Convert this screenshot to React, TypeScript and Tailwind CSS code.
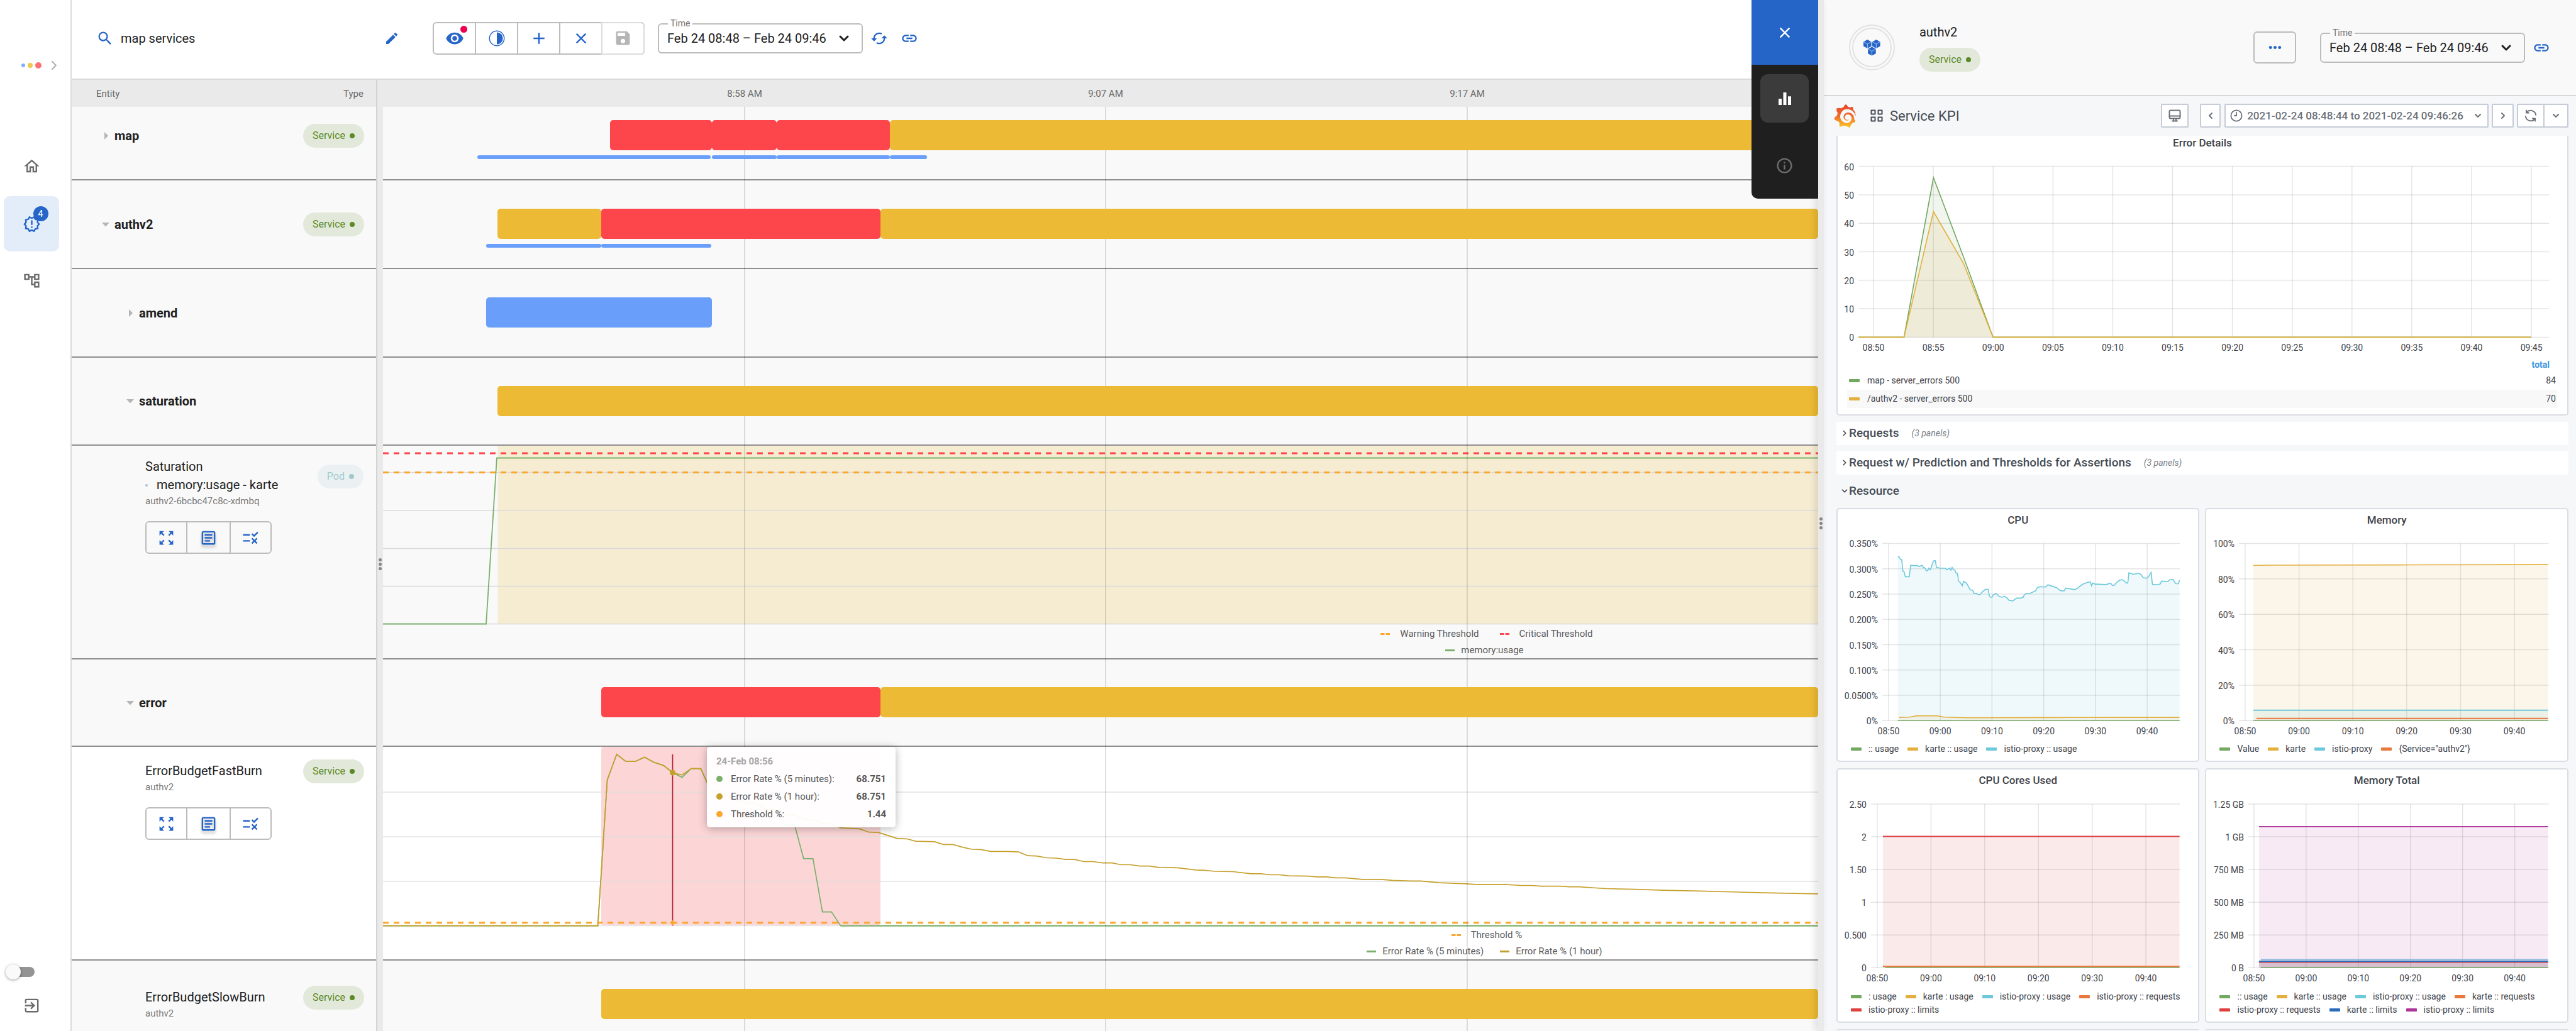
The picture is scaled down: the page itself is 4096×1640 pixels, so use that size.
import { useState, type ReactNode } from "react";
import {
  MdAdd,
  MdCached,
  MdClose,
  MdEdit,
  MdEqualizer,
  MdExitToApp,
  MdLink,
  MdMoreHoriz,
  MdOutlineAccountTree,
  MdOutlineArticle,
  MdOutlineHome,
  MdOutlineInfo,
  MdOutlineNewReleases,
  MdRule,
  MdSave,
  MdSearch,
  MdVisibility,
  MdZoomOutMap,
} from "react-icons/md";
import { SiGrafana } from "react-icons/si";
import { ChevronDown, ChevronLeft, ChevronRight } from "lucide-react";

/* ---------- shared pieces ---------- */

function Chip({ label, tone = "green" }: { label: string; tone?: "green" | "teal" }) {
  const green = tone === "green";
  return (
    <span
      className={`inline-flex h-[38px] items-center gap-[7px] rounded-full px-[15px] text-base leading-none ${
        green ? "bg-[#e2e9da] text-[#5c8a26]" : "bg-[#ebf1f3] text-[#9fcacd]"
      }`}
    >
      {label}
      <span className={`size-2 rounded-full ${green ? "bg-[#5c8a26]" : "bg-[#9fcacd]"}`} />
    </span>
  );
}

function TimeSelect({ id, surface }: { id: string; surface: string }) {
  return (
    <div className="relative h-12 w-[326px]">
      <label htmlFor={id} className={`absolute -top-2 left-4 px-1 text-sm leading-4 text-[#757575] ${surface}`}>
        Time
      </label>
      <select
        id={id}
        className="h-12 w-full appearance-none rounded-md border-2 border-[#bcbcbc] bg-transparent pl-[13px] text-xl text-[#212121]"
      >
        <option>Feb 24 08:48 – Feb 24 09:46</option>
      </select>
      <ChevronDown className="pointer-events-none absolute top-3 right-[18px] size-6 text-[#212121]" strokeWidth={3} />
    </div>
  );
}

function ContrastIcon() {
  return (
    <svg viewBox="0 0 26 26" className="size-[26px]" fill="none">
      <circle cx="13" cy="13" r="11.7" stroke="currentColor" strokeWidth="1.4" />
      <path d="M13 3.4a9.6 9.6 0 0 1 0 19.2z" fill="currentColor" />
    </svg>
  );
}

function CubesIcon() {
  const cube = (x: number, y: number) => (
    <g transform={`translate(${x} ${y})`}>
      <path d="M6.3 0 12.6 3.4V10.6L6.3 14 0 10.6V3.4z" fill="currentColor" />
      <path d="M.4 3.6 6.3 6.9 12.2 3.6M6.3 6.9V13.8" stroke="#cfe0f7" strokeWidth=".8" fill="none" />
    </g>
  );
  return (
    <svg viewBox="0 0 27 26" className="h-[26px] w-[27px] text-[#2665c8]">
      {cube(0, 0)}
      {cube(14, 0)}
      {cube(7.1, 11.6)}
    </svg>
  );
}

function GripDots() {
  return (
    <span className="flex flex-col gap-[2px]">
      <i className="size-[5px] rounded-full bg-[#858585]" />
      <i className="size-[5px] rounded-full bg-[#858585]" />
      <i className="size-[5px] rounded-full bg-[#858585]" />
    </span>
  );
}

/* ---------- navigation rail ---------- */

function Rail() {
  const [dark, setDark] = useState(false);
  return (
    <nav className="flex w-[114px] shrink-0 flex-col border-r-2 border-[#dcdcdc] bg-white text-[#6b6b6b]">
      <button className="mt-[92px] ml-[34px] flex h-6 items-center" aria-label="Expand menu">
        <span className="size-[6px] rounded-full bg-[#7fb1fb]" />
        <span className="ml-1 size-2 rounded-full bg-[#efc84f]" />
        <span className="ml-1 size-[10px] rounded-full bg-[#fd7074]" />
        <ChevronRight className="ml-2 size-6 text-[#b0b0b0]" strokeWidth={2} />
      </button>
      <a href="#home" aria-label="Home" className="mt-[104px] ml-[6px] flex h-[88px] w-[88px] items-center justify-center">
        <MdOutlineHome size={29} />
      </a>
      <a
        href="#insights"
        aria-label="Insights"
        className="mt-1 ml-[6px] flex h-[88px] w-[88px] items-center justify-center rounded-[10px] bg-[#e3edfa] text-[#2665c8]"
      >
        <span className="relative">
          <MdOutlineNewReleases size={29} />
          <span className="absolute -top-[14px] left-[17px] flex size-6 items-center justify-center rounded-full bg-[#2665c8] text-sm text-white">
            4
          </span>
        </span>
      </a>
      <a href="#graph" aria-label="Entity graph" className="mt-[2px] ml-[6px] flex h-[88px] w-[88px] items-center justify-center">
        <MdOutlineAccountTree size={29} />
      </a>
      <div className="mt-auto flex flex-col">
        <input
          type="checkbox"
          role="switch"
          aria-label="Dark mode"
          checked={dark}
          onChange={() => setDark(!dark)}
          className="relative ml-[15px] h-4 w-10 appearance-none rounded-full bg-[#949494] before:absolute before:-top-1 before:-left-[6px] before:size-6 before:rounded-full before:bg-[#fafafa] before:shadow-[0_1px_4px_rgba(0,0,0,0.4)]"
        />
        <a href="#logout" aria-label="Sign out" className="mt-[31px] mb-[26px] ml-9">
          <MdExitToApp size={29} />
        </a>
      </div>
    </nav>
  );
}

/* ---------- top bar ---------- */

function TopBar() {
  const [query, setQuery] = useState("map services");
  const tool = "flex w-[67px] items-center justify-center border-l-2 border-[#bcbcbc] first:w-[65px] first:border-l-0";
  return (
    <header className="flex h-[127px] shrink-0 items-center border-b-2 border-[#dadada] bg-white pb-1 pl-[39px] text-[#2665c8]">
      <label className="flex w-[458px] items-center gap-[11px]">
        <MdSearch size={28} className="shrink-0" />
        <input
          aria-label="Search"
          value={query}
          onChange={(e) => setQuery(e.target.value)}
          className="min-w-0 flex-1 text-xl text-[#212121] outline-none"
        />
      </label>
      <button aria-label="Edit search">
        <MdEdit size={24} />
      </button>
      <div className="ml-[53px] flex h-[52px] rounded-md border-2 border-[#bcbcbc]">
        <button className={tool} aria-label="Visibility">
          <span className="relative">
            <MdVisibility size={30} />
            <span className="absolute -top-[5px] left-[24px] size-[11px] rounded-full bg-[#ee0050]" />
          </span>
        </button>
        <button className={tool} aria-label="Contrast">
          <ContrastIcon />
        </button>
        <button className={tool} aria-label="Add">
          <MdAdd size={30} />
        </button>
        <button className={tool} aria-label="Clear">
          <MdClose size={28} />
        </button>
        <button
          disabled
          aria-label="Save"
          className="-my-[2px] -mr-[2px] flex w-[69px] items-center justify-center rounded-r-md border-2 border-[#dcdcdc] text-[#b5b5b5]"
        >
          <MdSave size={29} />
        </button>
      </div>
      <div className="ml-[21px]">
        <TimeSelect id="range-main" surface="bg-white" />
      </div>
      <button className="ml-3" aria-label="Refresh">
        <MdCached size={28} />
      </button>
      <button className="ml-5" aria-label="Copy link">
        <MdLink size={28} />
      </button>
    </header>
  );
}

/* ---------- entity table ---------- */

function Caret({ open }: { open: boolean }) {
  return (
    <svg viewBox="0 0 12 12" className="size-3" fill="#b5b5b5">
      {open ? <path d="M0 3h12L6 9.5z" /> : <path d="M4 0 10 6 4 12z" />}
    </svg>
  );
}

function EntityName({ name, open }: { name: string; open: boolean }) {
  return (
    <button className="flex items-center gap-2 text-xl font-bold text-[#212121]">
      <Caret open={open} />
      {name}
    </button>
  );
}

function RowActions() {
  return (
    <div className="mt-[21px] flex h-[52px] w-[201px] rounded-md border-2 border-[#bcbcbc] text-[#2665c8]">
      <button className="flex flex-1 items-center justify-center" aria-label="Expand chart">
        <MdZoomOutMap size={29} />
      </button>
      <button className="flex w-[71px] items-center justify-center border-x-2 border-[#bcbcbc]" aria-label="Open logs">
        <MdOutlineArticle size={29} className="drop-shadow-[0_4px_2px_rgba(0,0,0,0.25)]" />
      </button>
      <button className="flex flex-1 items-center justify-center" aria-label="Edit rule">
        <MdRule size={29} />
      </button>
    </div>
  );
}

function AssertionName({ title, detail, scope }: { title: string; detail?: string; scope: string }) {
  return (
    <>
      <div className="text-xl leading-[29px] text-[#212121]">{title}</div>
      {detail && (
        <div className="flex items-center gap-[14px] text-xl leading-[29px] text-[#212121]">
          <span className="size-1 rounded-full bg-[#a9c3dd]" />
          {detail}
        </div>
      )}
      <div className="text-[15px] leading-[22px] text-[#7a7a7a]">{scope}</div>
    </>
  );
}

function EntityTable() {
  const cell = "border-b-2 border-[#8f8f8f]";
  return (
    <table className="w-[484px] shrink-0 border-separate border-spacing-0 self-start bg-[#f9f9f9]">
      <thead>
        <tr className="bg-[#eaeaea] text-[15px] text-[#6b6b6b]">
          <th className="h-[43px] pt-[2px] pl-[39px] text-left font-normal">Entity</th>
          <th className="pt-[2px] pr-5 text-right font-normal">Type</th>
        </tr>
      </thead>
      <tbody>
        <tr>
          <td className={`${cell} h-[117px] pb-6 pl-12`}>
            <EntityName name="map" open={false} />
          </td>
          <td className={`${cell} pr-[19px] pb-6 text-right`}>
            <Chip label="Service" />
          </td>
        </tr>
        <tr>
          <td className={`${cell} h-[141px] pl-12`}>
            <EntityName name="authv2" open />
          </td>
          <td className={`${cell} pr-[19px] text-right`}>
            <Chip label="Service" />
          </td>
        </tr>
        <tr>
          <td className={`${cell} h-[141px] pl-[87px]`} colSpan={2}>
            <EntityName name="amend" open={false} />
          </td>
        </tr>
        <tr>
          <td className={`${cell} h-[140px] pl-[87px]`} colSpan={2}>
            <EntityName name="saturation" open />
          </td>
        </tr>
        <tr className="align-top">
          <td className={`${cell} h-[340px] pt-[19px] pl-[117px]`}>
            <AssertionName title="Saturation" detail="memory:usage - karte" scope="authv2-6bcbc47c8c-xdmbq" />
            <RowActions />
          </td>
          <td className={`${cell} pt-[30px] pr-5 text-right`}>
            <Chip label="Pod" tone="teal" />
          </td>
        </tr>
        <tr>
          <td className={`${cell} h-[139px] pl-[87px]`} colSpan={2}>
            <EntityName name="error" open />
          </td>
        </tr>
        <tr className="bg-white align-top">
          <td className={`${cell} h-[340px] pt-6 pl-[117px]`}>
            <AssertionName title="ErrorBudgetFastBurn" scope="authv2" />
            <RowActions />
          </td>
          <td className={`${cell} pt-5 pr-[19px] text-right`}>
            <Chip label="Service" />
          </td>
        </tr>
        <tr className="align-top">
          <td className="h-[112px] pt-11 pl-[117px]">
            <AssertionName title="ErrorBudgetSlowBurn" scope="authv2" />
          </td>
          <td className="pt-10 pr-[19px] text-right">
            <Chip label="Service" />
          </td>
        </tr>
      </tbody>
    </table>
  );
}

/* ---------- timeline ---------- */

const SPAN = 2282;
const pct = (v: number) => `${(v / SPAN) * 100}%`;

const HOURS = [
  { at: 575, label: "8:58 AM" },
  { at: 1149, label: "9:07 AM" },
  { at: 1724, label: "9:17 AM" },
];

type Seg = { from: number; to: number; kind: "critical" | "warning" | "info" };

const SEG_COLOR = { critical: "bg-[#fc464c]", warning: "bg-[#ecba34]", info: "bg-[#699ffa]" };

function Bars({ segs, size }: { segs: Seg[]; size: string }) {
  return (
    <div className={`relative z-10 ${size}`}>
      {segs.map((s) => (
        <span
          key={s.from}
          className={`absolute inset-y-0 rounded-[5px] ${SEG_COLOR[s.kind]}`}
          style={{ left: pct(s.from), width: pct(s.to - s.from) }}
        />
      ))}
    </div>
  );
}

function TimelineRow({ className, segs, notes }: { className: string; segs: Seg[]; notes?: Seg[] }) {
  return (
    <div className={`border-[#8f8f8f] ${className}`}>
      <Bars segs={segs} size="h-12" />
      {notes && (
        <div className="pt-2">
          <Bars segs={notes} size="h-[6px]" />
        </div>
      )}
    </div>
  );
}

function LegendItem({ color, label, dashed }: { color: string; label: string; dashed?: boolean }) {
  return (
    <span className={`flex items-center ${dashed ? "gap-4 pl-[7px]" : "gap-[10px]"}`}>
      <svg viewBox="0 0 15 3" className="h-[3px] w-[15px]">
        <path d="M0 1.5h15" stroke={color} strokeWidth="3" strokeDasharray={dashed ? "6.5 2" : undefined} />
      </svg>
      {label}
    </span>
  );
}

function LegendLine({ children }: { children: ReactNode }) {
  return <div className="flex h-[26px] items-center justify-center gap-[26px]">{children}</div>;
}

function SaturationChart() {
  return (
    <div className="flex h-[340px] flex-col justify-between border-b-2 border-[#8f8f8f]">
      <svg viewBox={`0 0 ${SPAN} 286`} preserveAspectRatio="none" className="block h-[286px] w-full" fill="none">
        <path d="M182.5 0H2282V283.5H182.5z" fill="#f6ecd2" />
        <path d="M0 42.5H2282M0 103H2282M0 163.5H2282M0 223.5H2282M0 283.5H2282" stroke="#dadada" strokeWidth="1.5" />
        <path d="M0 12H2282" stroke="#fc464c" strokeWidth="3" strokeDasharray="9 8" />
        <path d="M0 42.5H2282" stroke="#fba62c" strokeWidth="3" strokeDasharray="9 8" />
        <path d="M0 283.5H164L181 19.5H2282" stroke="#7bb06c" strokeWidth="1.8" />
      </svg>
      <div className="pl-[53.5%] text-[15px] text-[#5c5c5c]">
        <LegendLine>
          <LegendItem color="#fba62c" label="Warning Threshold" dashed />
          <LegendItem color="#fc464c" label="Critical Threshold" dashed />
        </LegendLine>
        <LegendLine>
          <LegendItem color="#7bb06c" label="memory:usage" />
        </LegendLine>
      </div>
    </div>
  );
}

const HOUR_RATE =
  "0,284.6 341.6,284.6 356.6,52.7 371.6,11.8 386,23.2 401,23.2 416,16.4 430,24.3 446,29.6 460.5,41 475.5,44.8 490,34.6 505.4,34.6 520.4,68.3 535.4,71.7 560.5,83.8 579.9,89.5 594.3,89.5 608.8,99.3 624.3,100.1 638.8,107.7 653.3,108.4 668.8,115.3 683.7,116.4 698.7,122.1 713.2,122.1 727.7,128.9 757.7,130.4 772.6,135.7 787.6,136.1 817.1,145.6 832.6,146.3 847.1,150.1 877,150.9 891.5,155.4 906.5,155.4 921.5,159.6 936.5,163 951,163.4 966,166.4 990.6,166.4 1010.4,167.2 1025.4,173.2 1038.9,173.7 1055.5,176.5 1070.4,177 1085.4,179.2 1099.5,179.2 1114.5,182.5 1128.6,182.5 1144.4,184.7 1159.4,184.7 1173.5,187.5 1188.5,187.5 1203.4,189.7 1218.4,189.7 1234.2,191.9 1263.3,192.4 1292.4,195.8 1307.3,196.3 1322.3,198 1351.4,198.5 1380.5,201.8 1396.3,201.8 1411.2,203.5 1425.4,203.5 1440.3,205.1 1471.1,205.7 1486,206.8 1500.2,206.8 1515.1,208.4 1530.1,208.4 1560,211.2 1590,211.2 1604.9,212.3 1634,213.4 1649.8,213.4 1678.9,216.1 1723,217.8 1737.1,218.9 1782.8,218.9 1810.2,220.5 1826,220.5 1841.8,221.6 1871.7,221.6 1886.7,222.7 1901.6,222.7 1944.9,225.5 1990.6,226.6 2036.3,228.2 2094.5,229.4 2154.3,231 2194.2,232.1 2244.1,233.2 2282,233.8";

const FIVE_MINUTE_RATE =
  "0,284.6 341.6,284.6 356.6,52.7 371.6,11.8 386,23.2 401,23.2 416,16.4 430,24.3 446,29.6 460.5,41 475.5,48.6 490,34.6 505.4,34.6 520.4,68.3 535.4,71.7 560.5,83.8 579.9,89.5 594.3,89.5 608.8,99.3 624.3,100.1 638.8,123.6 654.3,123.6 668.8,177.8 683.7,177.8 698.7,262.6 713.2,262.6 727.7,284.6 2282,284.6";

function ErrorChart() {
  return (
    <div className="relative flex h-[340px] flex-col justify-between border-b-2 border-[#8f8f8f] bg-white">
      <svg viewBox={`0 0 ${SPAN} 286`} preserveAspectRatio="none" className="block h-[286px] w-full" fill="none">
        <rect x="347" y="0" width="444" height="283.5" rx="4" fill="#fcd6d7" />
        <path d="M0 72H2282M0 143H2282M0 214H2282M0 284.6H2282" stroke="#dcdcdc" strokeOpacity=".8" strokeWidth="1.5" />
        <polyline points={FIVE_MINUTE_RATE} stroke="#7bb06c" strokeWidth="1.7" />
        <polyline points={HOUR_RATE} stroke="#c6a02c" strokeWidth="1.7" />
        <path d="M728 284.6H2282" stroke="#7bb06c" strokeWidth="1.7" />
        <path d="M0 279.7H2282" stroke="#fba62c" strokeWidth="3" strokeDasharray="9 8" />
        <path d="M460.5 12V284.6" stroke="#b3202c" strokeWidth="1.7" />
        <circle cx="460.5" cy="41" r="4.5" fill="#c6a02c" />
        <path d="M460.5 275.5 465 279.7 460.5 284 456 279.7z" fill="#fba62c" />
      </svg>
      <div className="pl-[53.5%] text-[15px] text-[#5c5c5c]">
        <LegendLine>
          <LegendItem color="#fba62c" label="Threshold %" dashed />
        </LegendLine>
        <LegendLine>
          <LegendItem color="#7bb06c" label="Error Rate % (5 minutes)" />
          <LegendItem color="#c6a02c" label="Error Rate % (1 hour)" />
        </LegendLine>
      </div>
      <div
        role="tooltip"
        className="absolute top-0 z-20 h-32 w-[300px] rounded-[5px] bg-white/95 px-[15px] pt-[9px] text-[15px] text-[#555555] shadow-[0_2px_14px_rgba(0,0,0,0.3)]"
        style={{ left: pct(515) }}
      >
        <div className="leading-7 font-bold text-[#a6a6a6]">24-Feb 08:56</div>
        {[
          ["bg-[#7bb06c]", "Error Rate % (5 minutes):", "68.751"],
          ["bg-[#c6a02c]", "Error Rate % (1 hour):", "68.751"],
          ["bg-[#fba62c]", "Threshold %:", "1.44"],
        ].map(([dot, label, value]) => (
          <div key={label} className="flex items-center leading-7">
            <span className={`mr-[13px] size-[10px] rounded-full ${dot}`} />
            {label}
            <b className="ml-auto">{value}</b>
          </div>
        ))}
      </div>
    </div>
  );
}

function Timeline() {
  return (
    <section className="flex min-w-0 flex-1 flex-col bg-[#f9f9f9]" aria-label="Timeline">
      <div className="relative h-[43px] bg-[#eaeaea] text-[15px] leading-[45px] text-[#6b6b6b]">
        {HOURS.map((h) => (
          <span key={h.label} className="absolute -translate-x-1/2" style={{ left: pct(h.at) }}>
            {h.label}
          </span>
        ))}
      </div>
      <div className="relative flex-1">
        <TimelineRow
          className="h-[117px] border-b-2 pt-[21px]"
          segs={[
            { from: 361, to: 523, kind: "critical" },
            { from: 523, to: 626, kind: "critical" },
            { from: 626, to: 806, kind: "critical" },
            { from: 806, to: SPAN, kind: "warning" },
          ]}
          notes={[
            { from: 150, to: 521, kind: "info" },
            { from: 523, to: 626, kind: "info" },
            { from: 626, to: 806, kind: "info" },
            { from: 806, to: 865, kind: "info" },
          ]}
        />
        <TimelineRow
          className="h-[141px] border-b-2 pt-[45px]"
          segs={[
            { from: 182, to: 347, kind: "warning" },
            { from: 347, to: 791, kind: "critical" },
            { from: 791, to: SPAN, kind: "warning" },
          ]}
          notes={[
            { from: 164, to: 347, kind: "info" },
            { from: 347, to: 522, kind: "info" },
          ]}
        />
        <TimelineRow className="h-[141px] border-b-2 pt-[45px]" segs={[{ from: 164, to: 523, kind: "info" }]} />
        <TimelineRow className="h-[140px] border-b-2 pt-[45px]" segs={[{ from: 182, to: SPAN, kind: "warning" }]} />
        <SaturationChart />
        <TimelineRow
          className="h-[139px] border-b-2 pt-11"
          segs={[
            { from: 347, to: 791, kind: "critical" },
            { from: 791, to: SPAN, kind: "warning" },
          ]}
        />
        <ErrorChart />
        <TimelineRow className="pt-[45px]" segs={[{ from: 347, to: SPAN, kind: "warning" }]} />
        {HOURS.map((h) => (
          <span
            key={h.label}
            className="pointer-events-none absolute inset-y-0 w-[2px] -translate-x-1/2 bg-black/12"
            style={{ left: pct(h.at) }}
          />
        ))}
      </div>
    </section>
  );
}

function SideTabs() {
  return (
    <div className="absolute top-0 right-0 z-20 flex w-[106px] flex-col items-center overflow-hidden rounded-bl-[10px] bg-[#1f1f1f] pb-[14px]">
      <button className="flex h-[103px] w-full items-center justify-center bg-[#2665c8] text-white" aria-label="Close panel">
        <MdClose size={28} />
      </button>
      <button className="mt-[15px] flex size-[77px] items-center justify-center rounded-xl bg-[#3b3b3b] text-white" aria-label="KPI">
        <MdEqualizer size={30} />
      </button>
      <button className="mt-[30px] flex size-[77px] items-center justify-center text-[#6e6e6e]" aria-label="Info">
        <MdOutlineInfo size={29} />
      </button>
    </div>
  );
}

/* ---------- dashboard charts ---------- */

const GREEN = "#73a860";
const YELLOW = "#e3b03f";
const CYAN = "#6cc9dc";
const ORANGE = "#e8783c";
const RED = "#de4141";
const BLUE = "#2a6bbd";
const PURPLE = "#ae349c";

type Series = { points: string; color: string; fill?: number; width?: number };

type PlotProps = {
  width: number;
  height: number;
  left: number;
  right: number;
  top: number;
  step: number;
  yLabels: string[];
  xStart: number;
  xStep: number;
  xLabels: string[];
  series: Series[];
  label: string;
};

function Plot(p: PlotProps) {
  const bottom = p.top + p.step * (p.yLabels.length - 1);
  return (
    <svg viewBox={`0 0 ${p.width} ${p.height}`} className="block w-full" role="img" aria-label={p.label} fontSize="14" fill="#3f434a">
      {p.series.map((s, i) => {
        const xs = s.points.split(" ").map((c) => c.split(",")[0]);
        return s.fill ? (
          <polygon
            key={i}
            points={`${xs[0]},${bottom} ${s.points} ${xs[xs.length - 1]},${bottom}`}
            fill={s.color}
            fillOpacity={s.fill}
          />
        ) : null;
      })}
      {p.yLabels.map((t, i) => {
        const y = p.top + i * p.step;
        return (
          <g key={t}>
            <path d={`M${p.left} ${y}H${p.right}`} stroke="#000" strokeOpacity=".1" strokeWidth="1.5" />
            <text x={p.left - 7} y={y + 6} textAnchor="end">
              {t}
            </text>
          </g>
        );
      })}
      {p.xLabels.map((t, i) => {
        const x = p.xStart + i * p.xStep;
        return (
          <g key={t}>
            <path d={`M${x} ${p.top}V${bottom}`} stroke="#000" strokeOpacity=".1" strokeWidth="1.5" />
            <text x={x} y={bottom + 22} textAnchor="middle">
              {t}
            </text>
          </g>
        );
      })}
      {p.series.map((s, i) => (
        <polyline key={i} points={s.points} fill="none" stroke={s.color} strokeWidth={s.width ?? 1.6} />
      ))}
    </svg>
  );
}

const CPU_PROXY =
  "95.7,41.4 97.8,41.7 99.9,45.9 101.9,46.3 104,65.1 105.7,65.4 107.7,73.4 114,73.4 116.1,55.3 126.4,55.7 129.8,57.1 134.3,55.3 136.8,59.1 138.9,59.5 141,63.7 143.1,63.7 145.2,59.8 147.2,62.3 149.3,57.8 151.4,50.4 153.5,47.7 155.5,48 157.2,58.5 163,59.8 171.3,59.8 173.8,62.6 178,59.5 180.1,63 182.1,58.5 184.2,62.3 186.3,62.6 188.4,67.5 190.5,67.8 192.5,80.7 194.6,82.1 198.3,88 200.4,80.7 204.6,83.5 206.7,86.3 210.8,94.3 215,95 217.1,100.2 220.8,99.8 224.1,102.3 226.6,101.6 230.4,97.4 234.9,93.6 239.5,93.6 241.6,104.4 243.6,106.1 245.7,106.1 247.4,102.3 252,99.8 256.9,104.7 261.1,106.1 265.3,104.4 269.8,107.5 272.7,111 278.6,112 284.8,107.5 291,107.5 295.2,106.1 297.3,101.6 301.4,99.8 306.4,99.8 314.7,96 317.6,91.1 321.8,89.4 330.5,89.8 334.7,86.3 341.7,88.7 348.4,90.8 354.6,95.7 360.4,96 362.9,91.5 377.1,93.9 381.2,92.2 389.5,85.6 395.8,83.1 402,81.4 404,87.7 406.1,83.5 409.5,85.2 426.9,85.9 434.4,83.8 437.3,87.3 439.8,87.3 444.4,82.1 449,78.6 453.5,78.3 460.2,83.8 461.8,82.8 463.5,67.1 470.6,69.6 479.7,67.8 483,70.3 486.4,75.1 492.2,75.8 495.1,72.7 498.8,66.5 500.9,85.6 509.2,86.3 513.4,84.9 515.5,80.4 525.4,81.1 528.8,78.3 533.7,77.9 537.9,84.5 542,84.5 544.1,79";

const TEN_MINUTES = ["08:50", "09:00", "09:10", "09:20", "09:30", "09:40"];

function Swatch({ color }: { color: string }) {
  return (
    <svg viewBox="0 0 17 5" className="h-[5px] w-[17px] shrink-0">
      <rect width="17" height="5" rx="1" fill={color} />
    </svg>
  );
}

function Panel({ title, children, legend }: { title: string; children: ReactNode; legend: [string, string][] }) {
  return (
    <article className="min-w-0 rounded-[5px] border-2 border-[#dadde4] bg-white pb-2">
      <h3 className="text-center text-[17px] leading-[34px] font-medium text-[#3f434a]">{title}</h3>
      {children}
      <ul className="flex flex-wrap gap-x-[14px] pt-[7px] pr-2 pl-[21px] text-sm leading-[21px] text-[#3f434a]">
        {legend.map(([color, label]) => (
          <li key={label} className="flex items-center gap-[11px]">
            <Swatch color={color} />
            {label}
          </li>
        ))}
      </ul>
    </article>
  );
}

function ErrorDetails() {
  return (
    <article className="rounded-b-[5px] border-2 border-t-0 border-[#dadde4] bg-white pb-[10px]">
      <h3 className="text-center text-[17px] leading-[22px] font-medium text-[#3f434a]">Error Details</h3>
      <Plot
        label="Error Details"
        width={1160}
        height={331}
        left={33}
        right={1131}
        top={26.6}
        step={45.3}
        yLabels={["60", "50", "40", "30", "20", "10", "0"]}
        xStart={57}
        xStep={95.1}
        xLabels={["08:50", "08:55", "09:00", "09:05", "09:10", "09:15", "09:20", "09:25", "09:30", "09:35", "09:40", "09:45"]}
        series={[
          { points: "33,298.4 105.5,298.4 152.3,44.5 200,170.5 247,298.4 1102.6,298.4", color: GREEN, fill: 0.11 },
          { points: "33,298.4 105.5,298.4 152.3,98.5 200,180.8 247,298.4 1102.6,298.4", color: YELLOW, fill: 0.12 },
        ]}
      />
      <table className="mr-4 ml-[15px] w-[calc(100%-31px)] text-sm text-[#3f434a]">
        <thead>
          <tr>
            <th className="h-[22px] p-0" aria-label="Series" />
            <th className="h-[22px] p-0 pr-3 text-right leading-[22px] font-bold text-[#3a96e0]">total</th>
          </tr>
        </thead>
        <tbody>
          <tr>
            <td className="h-[29px] pl-[3px]">
              <span className="flex items-center gap-3">
                <Swatch color={GREEN} />
                map - server_errors 500
              </span>
            </td>
            <td className="pr-[2px] text-right">84</td>
          </tr>
          <tr className="bg-[#f8f8f8]">
            <td className="h-[29px] pl-[3px]">
              <span className="flex items-center gap-3">
                <Swatch color={YELLOW} />
                /authv2 - server_errors 500
              </span>
            </td>
            <td className="pr-[2px] text-right">70</td>
          </tr>
        </tbody>
      </table>
    </article>
  );
}

function Section({ title, count, open }: { title: string; count?: string; open?: boolean }) {
  const Icon = open ? ChevronDown : ChevronRight;
  return (
    <button className={`mt-[10px] flex h-[37px] w-full items-center pl-[6px] text-[#464c54] ${open ? "pb-1" : "bg-white"}`}>
      <Icon className="size-[14px]" strokeWidth={3} />
      <span className="text-[19px] font-medium">{title}</span>
      {count && <span className="ml-5 text-sm text-[#7b8087] italic">{count}</span>}
    </button>
  );
}

function DashboardBar() {
  const box = "flex h-[38px] items-center justify-center rounded-[2px] border-2 border-[#c5ccd7] bg-white text-[#6b7078]";
  return (
    <div className="flex h-16 items-center pr-3 pl-[15px] text-[#464c54]">
      <svg width="0" height="0" aria-hidden="true">
        <linearGradient id="flame" x1="0" y1="0" x2="0" y2="1">
          <stop offset="0" stopColor="#e8452c" />
          <stop offset="0.5" stopColor="#ee6b2b" />
          <stop offset="1" stopColor="#fbc926" />
        </linearGradient>
      </svg>
      <SiGrafana size={37} fill="url(#flame)" />
      <svg viewBox="0 0 20 20" className="ml-[22px] size-5" fill="none" stroke="currentColor" strokeWidth="2" strokeLinejoin="round">
        <path d="M1.5 1.5h6v6h-6zM12.5 1.5h6v6h-6zM1.5 12.5h6v6h-6zM12.5 12.5h6v6h-6z" />
      </svg>
      <h2 className="ml-[11px] text-[22px]">Service KPI</h2>
      <button className={`${box} ml-auto w-11`} aria-label="Cycle view mode">
        <svg viewBox="0 0 20 20" className="size-5" fill="none" stroke="currentColor" strokeWidth="2" strokeLinejoin="round" strokeLinecap="round">
          <rect x="1.5" y="1.5" width="17" height="13" rx="2" />
          <path d="M1.5 10.5h17M8 14.5v3.5M12 14.5v3.5M6 18.5h8" />
        </svg>
      </button>
      <button className={`${box} ml-[18px] w-[33px]`} aria-label="Shift range back">
        <ChevronLeft className="size-4" strokeWidth={3} />
      </button>
      <button className={`${box} ml-[6px] w-[420px] gap-[7px] text-[17px] font-medium`}>
        <svg viewBox="0 0 20 20" className="size-5" fill="none" stroke="currentColor" strokeWidth="1.8" strokeLinecap="round">
          <circle cx="10" cy="10" r="8.6" />
          <path d="M10 5v5H7" />
        </svg>
        2021-02-24 08:48:44 to 2021-02-24 09:46:26
        <ChevronDown className="ml-2 size-4" strokeWidth={3} />
      </button>
      <button className={`${box} ml-[5px] w-[35px]`} aria-label="Shift range forward">
        <ChevronRight className="size-4" strokeWidth={3} />
      </button>
      <button className={`${box} ml-[5px] w-11`} aria-label="Refresh dashboard">
        <svg viewBox="0 0 20 20" className="size-5" fill="none" stroke="currentColor" strokeWidth="1.9" strokeLinecap="round" strokeLinejoin="round">
          <path d="M18.2 9A8.3 8.3 0 0 0 3.6 4.7M3 1.5v4h4M1.8 11A8.3 8.3 0 0 0 16.4 15.3M17 18.5v-4h-4" />
        </svg>
      </button>
      <button className={`${box} -ml-[2px] w-10`} aria-label="Refresh interval">
        <ChevronDown className="size-4" strokeWidth={3} />
      </button>
    </div>
  );
}

function DetailPanel() {
  return (
    <aside className="flex w-[29.2%] shrink-0 flex-col overflow-hidden bg-[#f5f7f9]">
      <header className="flex h-[153px] shrink-0 items-center border-b-2 border-[#d6d7d9] bg-[#f9f9f9] pr-[41px] pl-10">
        <span className="flex size-[73px] items-center justify-center rounded-full border-2 border-[#e2e2e2]">
          <span className="flex size-[63px] items-center justify-center rounded-full border-2 border-[#e2e2e2]">
            <CubesIcon />
          </span>
        </span>
        <div className="ml-[39px] flex flex-col items-start gap-[10px]">
          <h1 className="text-xl leading-[29px] text-[#212121]">authv2</h1>
          <Chip label="Service" />
        </div>
        <button
          className="ml-auto flex h-[51px] w-[68px] items-center justify-center rounded-md border-2 border-[#bcbcbc] text-[#2665c8]"
          aria-label="More actions"
        >
          <MdMoreHoriz size={29} />
        </button>
        <div className="ml-[38px]">
          <TimeSelect id="range-panel" surface="bg-[#f9f9f9]" />
        </div>
        <button className="ml-3 text-[#2665c8]" aria-label="Copy panel link">
          <MdLink size={28} />
        </button>
      </header>
      <DashboardBar />
      <div className="pr-3 pl-5">
        <ErrorDetails />
        <Section title="Requests" count="(3 panels)" />
        <Section title="Request w/ Prediction and Thresholds for Assertions" count="(3 panels)" />
        <Section title="Resource" open />
        <div className="mt-[6px] grid grid-cols-2 gap-x-[9px] gap-y-[10px]">
          <Panel
            title="CPU"
            legend={[
              [GREEN, ":: usage"],
              [YELLOW, "karte :: usage"],
              [CYAN, "istio-proxy :: usage"],
            ]}
          >
            <Plot
              label="CPU"
              width={574}
              height={331}
              left={71}
              right={545}
              top={20.5}
              step={40.3}
              yLabels={["0.350%", "0.300%", "0.250%", "0.200%", "0.150%", "0.100%", "0.0500%", "0%"]}
              xStart={81}
              xStep={82.3}
              xLabels={TEN_MINUTES}
              series={[
                { points: CPU_PROXY, color: CYAN, fill: 0.11 },
                {
                  points: "97.8,297.4 114.4,297 125.6,294.9 158.9,294.9 169.3,297 206.7,298 330,297.6 544,297.4",
                  color: YELLOW,
                  fill: 0.1,
                },
                { points: "95.7,302 544,302", color: GREEN },
              ]}
            />
          </Panel>
          <Panel
            title="Memory"
            legend={[
              [GREEN, "Value"],
              [YELLOW, "karte"],
              [CYAN, "istio-proxy"],
              [ORANGE, '{Service="authv2"}'],
            ]}
          >
            <Plot
              label="Memory"
              width={574}
              height={331}
              left={52}
              right={545}
              top={20.5}
              step={56.4}
              yLabels={["100%", "80%", "60%", "40%", "20%", "0%"]}
              xStart={62}
              xStep={85.7}
              xLabels={TEN_MINUTES}
              series={[
                { points: "75,55.3 103,55 330,54.6 544,54.2", color: YELLOW, fill: 0.11 },
                { points: "75,286 544,286", color: CYAN, fill: 0.11, width: 2 },
                { points: "80,299 544,299", color: ORANGE, fill: 0.1, width: 2 },
                { points: "75,302 544,302", color: GREEN },
              ]}
            />
          </Panel>
          <Panel
            title="CPU Cores Used"
            legend={[
              [GREEN, ": usage"],
              [YELLOW, "karte : usage"],
              [CYAN, "istio-proxy : usage"],
              [ORANGE, "istio-proxy :: requests"],
              [RED, "istio-proxy :: limits"],
            ]}
          >
            <Plot
              label="CPU Cores Used"
              width={574}
              height={310}
              left={53}
              right={545}
              top={21}
              step={52.1}
              yLabels={["2.50", "2", "1.50", "1", "0.500", "0"]}
              xStart={63}
              xStep={85.5}
              xLabels={TEN_MINUTES}
              series={[
                { points: "72,72.6 544,72.6", color: RED, fill: 0.11, width: 2 },
                { points: "76,281.3 544,281.3", color: GREEN },
                { points: "72,279.6 544,279.6", color: ORANGE, width: 2 },
              ]}
            />
          </Panel>
          <Panel
            title="Memory Total"
            legend={[
              [GREEN, ":: usage"],
              [YELLOW, "karte :: usage"],
              [CYAN, "istio-proxy :: usage"],
              [ORANGE, "karte :: requests"],
              [RED, "istio-proxy :: requests"],
              [BLUE, "karte :: limits"],
              [PURPLE, "istio-proxy :: limits"],
            ]}
          >
            <Plot
              label="Memory Total"
              width={574}
              height={310}
              left={67}
              right={545}
              top={21}
              step={52.1}
              yLabels={["1.25 GB", "1 GB", "750 MB", "500 MB", "250 MB", "0 B"]}
              xStart={76}
              xStep={83}
              xLabels={TEN_MINUTES}
              series={[
                { points: "84,57 544,57", color: PURPLE, fill: 0.1, width: 1.8 },
                { points: "87,268.7 544,268.7", color: "#8dbbd8", fill: 0.1, width: 2 },
                { points: "84,272.8 544,272.8", color: RED, fill: 0.18, width: 2 },
                { points: "84,271.4 544,271.4", color: BLUE, fill: 0.08, width: 2 },
                { points: "87,281.2 544,281.2", color: GREEN, width: 1.6 },
              ]}
            />
          </Panel>
          <div className="h-[3px] rounded-t-[5px] border-t-2 border-[#dadde4] bg-white" />
          <div className="h-[3px] rounded-t-[5px] border-t-2 border-[#dadde4] bg-white" />
        </div>
      </div>
    </aside>
  );
}

export default function App() {
  return (
    <div className="flex h-screen w-full overflow-hidden bg-white antialiased [font-family:Roboto,'Liberation_Sans',sans-serif]">
      <Rail />
      <main className="relative flex min-w-0 flex-1 flex-col">
        <TopBar />
        <div className="flex min-h-0 flex-1">
          <EntityTable />
          <div className="flex w-[11px] shrink-0 items-center justify-center border-l-2 border-[#d3d3d3] bg-[#eaeaea] pt-7">
            <GripDots />
          </div>
          <Timeline />
        </div>
        <SideTabs />
      </main>
      <div className="relative z-10 flex w-[9px] shrink-0 items-center justify-center bg-[#eaeaea] pt-6 shadow-[-4px_0_12px_rgba(0,0,0,0.14)]">
        <GripDots />
      </div>
      <DetailPanel />
    </div>
  );
}
